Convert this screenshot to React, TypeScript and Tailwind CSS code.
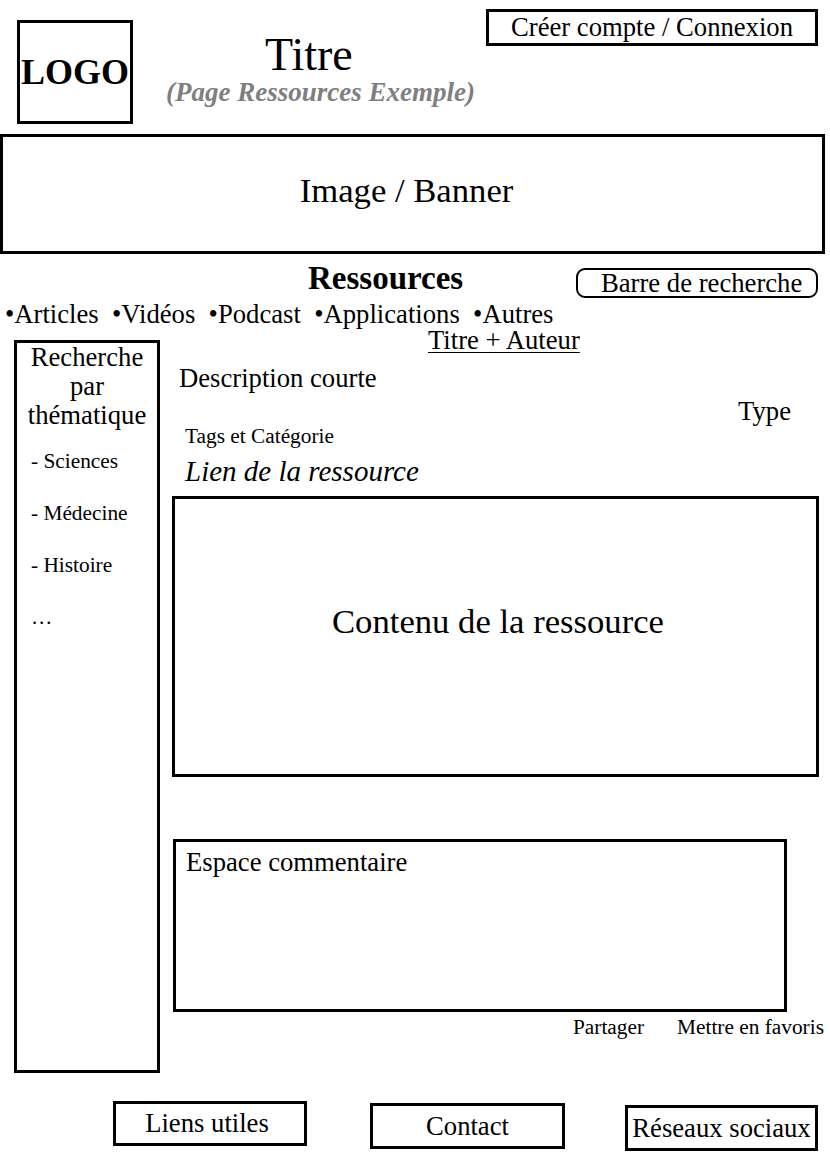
export default function App() {
  return (
    <div className="w-[830px] h-[1170px] bg-white text-black overflow-hidden font-['Liberation_Serif','Times_New_Roman',serif]">
      {/* Header */}
      <header className="flex items-start h-[134px]">
        <div className="ml-[17px] mt-[20px] w-[116px] h-[104px] border-[3px] border-black flex items-center justify-center">
          <span className="text-[36px] font-bold leading-none">LOGO</span>
        </div>
        <div className="ml-[33px] flex flex-col">
          <h1 className="ml-[99px] mt-[32px] text-[46px] leading-none">Titre</h1>
          <p className="mt-[1px] text-[27px] font-bold italic text-[#7f7f7f] leading-none">(Page Ressources Exemple)</p>
        </div>
        <div className="ml-auto mr-[12px] mt-[9px] w-[332px] h-[37px] border-[3px] border-black flex items-center justify-center text-[26.67px] leading-none">
          Créer compte / Connexion
        </div>
      </header>

      {/* Banner */}
      <div className="h-[120px] w-[825px] border-[3px] border-black flex items-center justify-center pb-[8px] pr-[12px] text-[34.67px] leading-none">
        Image / Banner
      </div>

      {/* Ressources + search */}
      <div className="flex items-start h-[48px]">
        <h2 className="ml-[308px] mt-[8px] text-[33px] font-bold leading-none">Ressources</h2>
        <div className="ml-auto mr-[12px] mt-[14px] w-[242px] h-[30px] border-[2.5px] border-black rounded-[9px] flex items-center pl-[23px] text-[26.67px] leading-none">
          Barre de recherche
        </div>
      </div>

      {/* Categories */}
      <div className="ml-[5px] h-[26px] text-[26.67px] leading-[24px] whitespace-pre">
        •Articles  •Vidéos  •Podcast  •Applications  •Autres
      </div>

      {/* Main */}
      <div className="flex items-start">
        <aside className="ml-[14px] mt-[12px] w-[146px] h-[733px] border-[3px] border-black flex flex-col shrink-0">
          <div className="text-center text-[26.67px] leading-[29px]">
            <div>Recherche</div>
            <div>par</div>
            <div>thématique</div>
          </div>
          <ul className="mt-[5px] pl-[14px] flex flex-col text-[21.33px] leading-[52px]">
            <li>- Sciences</li>
            <li>- Médecine</li>
            <li>- Histoire</li>
            <li>…</li>
          </ul>
        </aside>

        <main className="flex-1 flex flex-col">
          <div className="ml-[268px] mt-[0px] text-[26.67px] leading-[24px] underline decoration-1 underline-offset-[3px]">
            Titre + Auteur
          </div>
          <div className="ml-[19px] mt-[13px] text-[26.67px] leading-none">Description courte</div>
          <div className="self-end mr-[39px] mt-[6px] text-[26.67px] leading-none">Type</div>
          <div className="ml-[25px] mt-[2px] text-[21.33px] leading-none">Tags et Catégorie</div>
          <div className="ml-[25px] mt-[9px] text-[29px] italic leading-none">Lien de la ressource</div>

          <div className="ml-[12px] mt-[10px] w-[647px] h-[281px] border-[3px] border-black flex flex-col items-center pt-[105px] pl-[5px] text-[34.67px] leading-none">
            Contenu de la ressource
          </div>

          <div className="ml-[13px] mt-[62px] w-[614px] h-[173px] border-[3px] border-black pl-[10px] pt-[7px] text-[26.67px] leading-none">
            Espace commentaire
          </div>

          <div className="ml-[413px] mt-[5px] flex gap-[33px] text-[21.33px] leading-none whitespace-nowrap">
            <span>Partager</span>
            <span>Mettre en favoris</span>
          </div>
        </main>
      </div>

      {/* Footer */}
      <footer className="flex items-start text-[26.67px] leading-none">
        <div className="ml-[113px] mt-[28px] w-[194px] h-[45px] border-[3px] border-black flex items-center justify-center pr-[6px]">
          Liens utiles
        </div>
        <div className="ml-[63px] mt-[30px] w-[195px] h-[46px] border-[3px] border-black flex items-center justify-center">
          Contact
        </div>
        <div className="ml-[60px] mt-[32px] w-[193px] h-[46px] border-[3px] border-black flex items-center justify-center">
          Réseaux sociaux
        </div>
      </footer>
    </div>
  );
}
